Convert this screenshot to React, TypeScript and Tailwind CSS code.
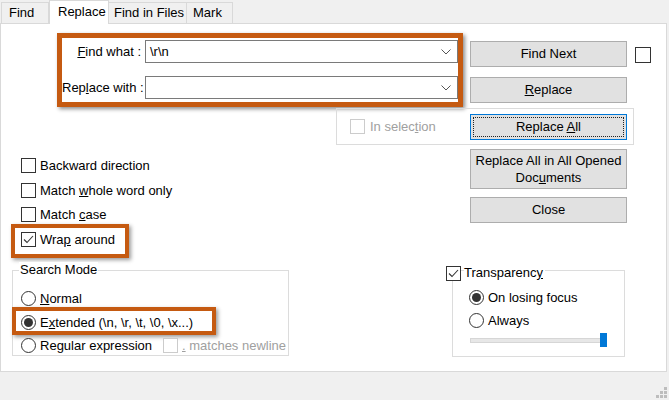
import React from "react";

const font = "font-['Liberation_Sans',Arial,sans-serif] text-[13px] leading-[16px] text-black";

function Check({ checked = false, disabled = false }: { checked?: boolean; disabled?: boolean }) {
  return (
    <span
      className={
        disabled
          ? "flex h-[15px] w-[15px] shrink-0 items-center justify-center border border-[#cccccc] bg-white"
          : "flex h-[15px] w-[15px] shrink-0 items-center justify-center border border-[#333333] bg-white"
      }
    >
      {checked && (
        <svg width="11" height="9" viewBox="0 0 11 9">
          <path d="M1 4.5 L4 7.5 L10 1" fill="none" stroke="#333" strokeWidth="1.1" />
        </svg>
      )}
    </span>
  );
}

function Radio({ on = false }: { on?: boolean }) {
  return (
    <span className="flex h-[15px] w-[15px] shrink-0 items-center justify-center rounded-full border border-[#333333] bg-white">
      {on && <span className="h-[9px] w-[9px] rounded-full bg-[#333333]" />}
    </span>
  );
}

function Combo({ value }: { value?: string }) {
  return (
    <div className="flex h-[23px] w-[313px] items-center border border-[#7a7a7a] bg-white pl-[4px] pr-[6px]">
      <span className="flex-1">{value}</span>
      <svg width="10" height="6" viewBox="0 0 10 6">
        <path d="M0.5 0.5 L5 5 L9.5 0.5" fill="none" stroke="#555" strokeWidth="1" />
      </svg>
    </div>
  );
}

function Btn({ children, h = "h-[26px]" }: { children: React.ReactNode; h?: string }) {
  return (
    <div className={`flex ${h} w-[157px] items-center justify-center border border-[#adadad] bg-[#e1e1e1] text-center`}>
      {children}
    </div>
  );
}

export default function App() {
  return (
    <div className={`flex h-[400px] w-[669px] flex-col overflow-hidden bg-[#f0f0f0] ${font}`}>
      {/* tabs */}
      <div className="relative z-10 flex h-[24px] items-start pl-[1px]">
        <div className="mt-[2px] flex h-[21px] w-[48px] items-center border border-b-0 border-[#d9d9d9] bg-[#f0f0f0] pl-[7px]">Find</div>
        <div className="flex h-[24px] w-[60px] items-center border border-b-0 border-[#d9d9d9] bg-white pl-[8px] pb-[2px]">Replace</div>
        <div className="mt-[2px] flex h-[21px] w-[78px] items-center border border-b-0 border-l-0 border-[#d9d9d9] bg-[#f0f0f0] pl-[5px]">Find in Files</div>
        <div className="mt-[2px] flex h-[21px] w-[46px] items-center border border-b-0 border-l-0 border-[#d9d9d9] bg-[#f0f0f0] pl-[6px]">Mark</div>
      </div>

      {/* panel */}
      <div className="-mt-[1px] flex h-[349px] w-[667px] flex-col border border-[#d9d9d9] bg-white">
        {/* row 1 */}
        <div className="mt-[9px] flex items-start">
          <div className="ml-[56px] flex h-[74px] w-[406px] flex-col border-[5px] border-[#c55a11] shadow-[2px_2px_4px_rgba(0,0,0,0.45)]">
            <div className="mt-[2px] flex items-center">
              <span className="w-[83px] whitespace-nowrap pr-[4px] text-right">
                <u>F</u>ind what :
              </span>
              <Combo value={"\\r\\n"} />
            </div>
            <div className="mt-[13px] flex items-center">
              <span className="w-[83px] whitespace-nowrap pr-[2px] text-right">
                Rep<u>l</u>ace with :
              </span>
              <Combo />
            </div>
          </div>
          <div className="ml-[7px] mt-[8px] flex flex-col">
            <Btn>Find Next</Btn>
            <div className="mt-[10px]">
              <Btn>
                <span>
                  <u>R</u>eplace
                </span>
              </Btn>
            </div>
          </div>
          <div className="ml-[8px] mt-[14px] h-[16px] w-[16px] border border-[#333333] bg-white" />
        </div>

        {/* row 2: in selection */}
        <div className="ml-[335px] mt-[1px] flex h-[37px] w-[298px] items-center border border-[#dcdcdc] pl-[13px] pr-[6px]">
          <Check disabled />
          <span className="ml-[5px] text-[#a0a0a0]">
            In selec<u>t</u>ion
          </span>
          <div className="relative ml-auto flex h-[26px] w-[157px] items-center justify-center border border-[#0078d7] bg-[#e1e1e1]">
            <span className="absolute inset-[2px] border border-dotted border-[#222]" />
            <span>
              Replace <u>A</u>ll
            </span>
          </div>
        </div>

        {/* row 3 */}
        <div className="flex items-start">
          <div className="flex w-[469px] flex-col pt-[13px]">
            <div className="ml-[20px] flex h-[15px] items-center gap-[4px]">
              <Check />
              <span>Backward direction</span>
            </div>
            <div className="ml-[20px] mt-[10px] flex h-[15px] items-center gap-[4px]">
              <Check />
              <span>
                Match <u>w</u>hole word only
              </span>
            </div>
            <div className="ml-[20px] mt-[9px] flex h-[15px] items-center gap-[4px]">
              <Check />
              <span>
                Match <u>c</u>ase
              </span>
            </div>
            <div className="ml-[10px] mt-[2px] h-[34px] w-[118px] border-[4px] border-[#c55a11] pl-[6px] pt-[4px] shadow-[2px_2px_4px_rgba(0,0,0,0.4)]">
              <div className="flex h-[15px] items-center gap-[4px]">
                <Check checked />
                <span>
                  Wra<u>p</u> around
                </span>
              </div>
            </div>
          </div>
          <div className="mt-[4px] flex flex-col">
            <Btn h="h-[40px]">
              <span className="leading-[17px]">
                Replace All in All Opened
                <br />
                Doc<u>u</u>ments
              </span>
            </Btn>
            <div className="mt-[8px]">
              <Btn>Close</Btn>
            </div>
          </div>
        </div>

        {/* row 4 */}
        <div className="mt-[12px] flex items-start">
          <div className="relative ml-[11px] flex h-[86px] w-[277px] flex-col border border-[#dcdcdc] pl-[8px] pt-[20px]">
            <span className="absolute -top-[9px] left-[6px] bg-white px-[1px]">Search Mode</span>
            <div className="flex h-[15px] items-center gap-[4px]">
              <Radio />
              <span>
                <u>N</u>ormal
              </span>
            </div>
            <div className="-ml-[9px] mt-[1px] h-[28px] w-[204px] border-[4px] border-[#c55a11] pl-[5px] pt-[4px] shadow-[2px_2px_4px_rgba(0,0,0,0.4)]">
              <div className="flex h-[15px] items-center gap-[4px] whitespace-nowrap">
                <Radio on />
                <span>
                  E<u>x</u>
                  {"tended (\\n, \\r, \\t, \\0, \\x...)"}
                </span>
              </div>
            </div>
            <div className="mt-[3px] flex h-[15px] items-center overflow-hidden whitespace-nowrap">
              <div className="flex w-[142px] shrink-0 items-center gap-[4px]">
                <Radio />
                <span>
                  Re<u>g</u>ular expression
                </span>
              </div>
              <Check disabled />
              <span className="ml-[4px] text-[#a0a0a0]">
                <u>.</u> matches newline
              </span>
            </div>
          </div>

          <div className="relative ml-[163px] flex h-[87px] w-[173px] flex-col border border-[#dcdcdc] pl-[16px] pt-[19px]">
            <div className="absolute -left-[7px] -top-[6px] flex items-center gap-[3px]">
              <Check checked />
              <span className="bg-white pr-[2px]">
                Transparenc<u>y</u>
              </span>
            </div>
            <div className="flex h-[15px] items-center gap-[4px]">
              <Radio on />
              <span>On losing focus</span>
            </div>
            <div className="mt-[8px] flex h-[15px] items-center gap-[4px]">
              <Radio />
              <span>Always</span>
            </div>
            <div className="relative ml-[1px] mt-[5px] flex h-[14px] w-[137px] items-center">
              <div className="h-[5px] w-full border border-[#d6d6d6] bg-[#e7e7e7]" />
              <span className="absolute right-0 top-0 h-[14px] w-[7px] bg-[#0078d7]" />
            </div>
          </div>
        </div>
      </div>

      {/* footer with grip */}
      <div className="flex flex-1 items-end justify-end pb-[2px] pr-[2px]">
        <svg width="11" height="11" viewBox="0 0 11 11">
          <rect x="8" y="0" width="3" height="3" fill="#bdbdbd" />
          <rect x="4" y="4" width="3" height="3" fill="#bdbdbd" />
          <rect x="8" y="4" width="3" height="3" fill="#bdbdbd" />
          <rect x="0" y="8" width="3" height="3" fill="#bdbdbd" />
          <rect x="4" y="8" width="3" height="3" fill="#bdbdbd" />
          <rect x="8" y="8" width="3" height="3" fill="#bdbdbd" />
        </svg>
      </div>
    </div>
  );
}
